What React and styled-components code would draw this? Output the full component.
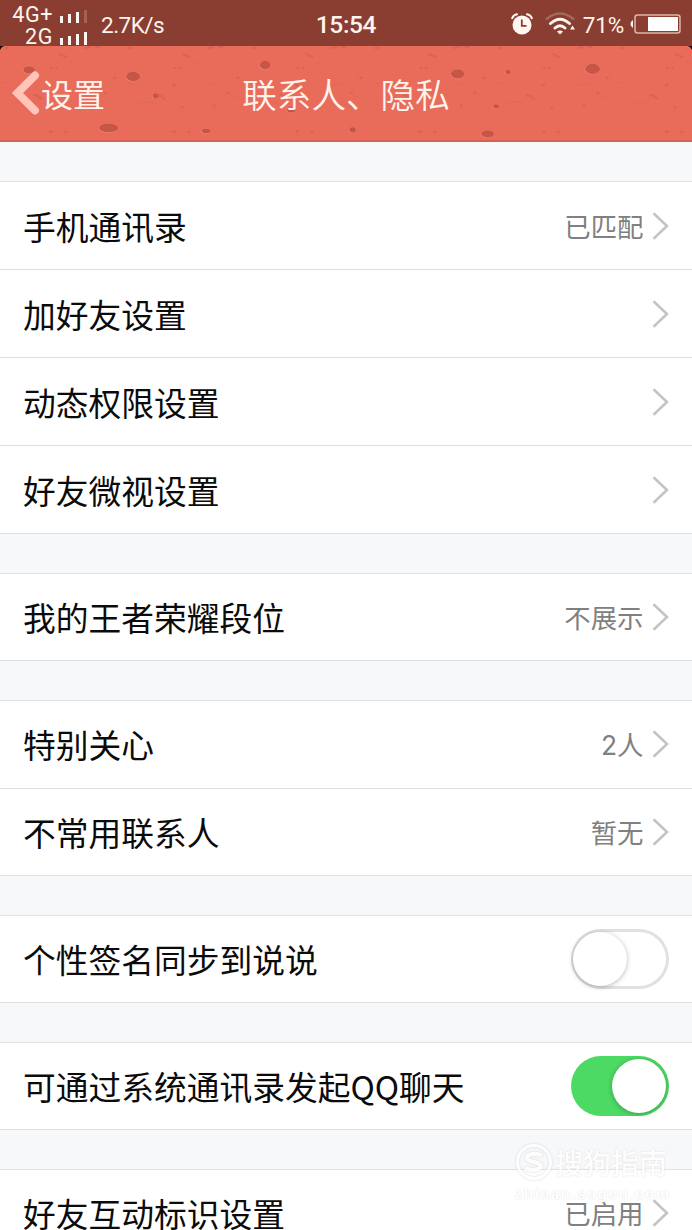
import React from "react";
import styled, { createGlobalStyle } from "styled-components";

const Global = createGlobalStyle`
  * { box-sizing: border-box; }
  html, body { margin: 0; padding: 0; }
  body { background: #f7f8fa; font-family: "Noto Sans CJK SC", sans-serif; overflow: hidden; }
`;

const Screen = styled.div`
  position: relative;
  width: 692px;
  height: 1230px;
  overflow: hidden;
  background: #f7f8fa;
  display: flex;
  flex-direction: column;
`;

const StatusBar = styled.div`
  flex: none;
  height: 46px;
  background: #8a3e31;
  color: #fff3ee;
  display: grid;
  grid-template-columns: 1fr auto 1fr;
  align-items: center;
  font-family: Roboto, sans-serif;
`;

const StatusLeft = styled.div`
  display: flex;
  align-items: center;
  height: 46px;
`;

const Carriers = styled.div`
  width: 87px;
  padding-top: 4px;
  display: flex;
  flex-direction: column;
`;

const Carrier = styled.div`
  display: flex;
  justify-content: flex-end;
  align-items: center;
  gap: 7px;
  height: 22px;
  font-size: 21.5px;
  letter-spacing: 0.6px;
  line-height: 22px;
`;

const Bars = styled.svg`
  display: block;
  margin-top: 1px;
`;

const Speed = styled.span`
  margin-left: 14px;
  font-size: 22.5px;
  line-height: 46px;
  letter-spacing: -0.5px;
  padding-top: 1px;
`;

const Clock = styled.span`
  font-size: 24.5px;
  font-weight: 500;
  letter-spacing: -0.35px;
  line-height: 46px;
  padding-top: 2px;
`;

const StatusRight = styled.div`
  display: flex;
  align-items: center;
  justify-content: flex-end;
  padding-right: 11px;
`;

const Percent = styled.span`
  font-size: 22.5px;
  line-height: 46px;
  letter-spacing: -0.2px;
  padding-top: 1px;
  margin: 0 6px 0 7px;
`;

const NavBar = styled.header`
  flex: none;
  position: relative;
  height: 96px;
  background: #e96b59;
  border-bottom: 2px solid #d46253;
  color: #fff3ed;
  display: grid;
  grid-template-columns: 1fr auto 1fr;
  align-items: center;
`;

const Texture = styled.svg`
  position: absolute;
  left: 0;
  top: 0;
`;

const Back = styled.div`
  position: relative;
  display: flex;
  align-items: center;
  padding-left: 11px;
  font-size: 32px;
  line-height: 94px;
  height: 94px;
`;

const Title = styled.h1`
  position: relative;
  margin: 0;
  font-size: 34.6px;
  font-weight: 350;
  line-height: 94px;
  height: 94px;
`;

const Groups = styled.main`
  display: flex;
  flex-direction: column;
  gap: 39px;
  padding-top: 39px;
`;

const Group = styled.section`
  background: #fff;
  border-top: 1px solid #e0e1e3;
  border-bottom: 1px solid #dddee0;
  display: flex;
  flex-direction: column;
  height: ${(p) => p.$height}px;
`;

const Row = styled.div`
  flex: 1;
  display: flex;
  align-items: center;
  padding: 0 23px;
  & + & { border-top: 1px solid #dedfe0; }
`;

const Label = styled.span`
  flex: 1;
  font-size: 32.75px;
  line-height: 48px;
  color: #0b0b0b;
  white-space: nowrap;
`;

const Value = styled.span`
  font-family: Inter, "Noto Sans CJK SC", sans-serif;
  font-size: 26.4px;
  line-height: 40px;
  color: #808080;
  padding-top: 2px;
  margin-right: 8.5px;
`;

const Switch = styled.span`
  width: 98px;
  height: 60px;
  border-radius: 30px;
  padding: ${(p) => (p.$on ? "3px" : "3px 2px")};
  display: flex;
  justify-content: ${(p) => (p.$on ? "flex-end" : "flex-start")};
  background: ${(p) => (p.$on ? "#4cd964" : "#fff")};
  box-shadow: ${(p) => (p.$on ? "none" : "inset 0 0 0 3px #e1e1e1")};
`;

const Knob = styled.span`
  width: 54px;
  height: 54px;
  border-radius: 50%;
  background: #fff;
  box-shadow: 0 1px 5px rgba(0, 0, 0, 0.28);
`;

const Watermark = styled.div`
  position: absolute;
  left: 515px;
  top: 1142px;
  width: 160px;
  color: #fff;
  opacity: 0.85;
  text-shadow: 0 0 2px #d4d4d4;
`;

const Brand = styled.div`
  display: flex;
  align-items: center;
  gap: 2px;
  font-size: 28px;
  font-weight: 500;
  line-height: 40px;
`;

const Mark = styled.svg`
  filter: drop-shadow(0 0 1px #cfcfcf);
`;

const Site = styled.div`
  font-family: "Liberation Sans", sans-serif;
  font-weight: 700;
  font-size: 15px;
  letter-spacing: 1.5px;
  line-height: 16px;
  margin-top: 4px;
  white-space: nowrap;
`;

const Signal = ({ dimLast }) => (
  <Bars width="27" height="14" fill="#fff6f1">
    <rect x="0" y="7" width="3" height="7" />
    <rect x="8" y="5" width="3" height="9" />
    <rect x="16" y="3" width="3" height="11" />
    <rect x="24" y="1" width="3" height="13" opacity={dimLast ? 0.2 : 1} />
  </Bars>
);

const Alarm = () => (
  <svg width="22" height="22" viewBox="0 0 22 22">
    <circle cx="11" cy="12" r="9.5" fill="#fff6f1" />
    <path d="M1.2 5.2Q2.5 2 6 1.3M20.8 5.2Q19.5 2 16 1.3" fill="none" stroke="#fff6f1" strokeWidth="2" strokeLinecap="round" />
    <path d="M10.8 6.5V12.8H15.5" fill="none" stroke="#8a3e31" strokeWidth="1.8" />
  </svg>
);

const WifiMark = styled.svg`
  margin-left: 12px;
`;

const Wifi = () => (
  <WifiMark width="31" height="24" viewBox="0 0 31 24" fill="none" strokeLinecap="round">
    <path d="M1.5 7Q15 -4 28.5 7" stroke="#fff" strokeOpacity=".22" strokeWidth="2.3" />
    <path d="M5.5 11.5Q15 3 24.5 11.5" stroke="#fff6f1" strokeWidth="3" />
    <path d="M10 16Q15 11.5 20 16" stroke="#fff6f1" strokeWidth="3" />
    <path d="M12 19.5Q15 17.5 18 19.5L15 22.5Z" fill="#fff6f1" />
    <path d="M25 17.5L27.5 13.5L30 17.5Z" fill="#fff6f1" />
  </WifiMark>
);

const Battery = () => (
  <svg width="51" height="20" viewBox="0 0 51 20">
    <path d="M3 6Q0.5 7.5 .5 10T3 14Z" fill="#fff6f1" />
    <rect x="5" y="1" width="45" height="18" rx="2.5" fill="none" stroke="#e0b5ab" strokeWidth="1.5" />
    <rect x="18" y="3" width="30" height="14" fill="#fff" />
  </svg>
);

const pits = [
  [29, 24, 5.5, 3.2], [133, 30.5, 6.8, 4.4], [155.5, 50, 3, 2.5], [108.5, 82, 9.5, 4],
  [206, 85, 4.5, 2], [265, 19, 5.2, 4], [457.5, 28, 6.5, 4.2], [352.5, 84, 3.2, 2.6],
  [291, 64, 4, 2.5], [592.5, 23, 7.3, 4.8], [508, 26, 2.5, 2], [496, 60.5, 3, 1.8], [487.5, 88, 6.2, 3.2],
];

const Sponge = () => (
  <Texture width="692" height="94">
    <defs>
      <pattern id="specks" width="123.2" height="94" patternUnits="userSpaceOnUse">
        <g fill="none" stroke="#b94f40" strokeLinecap="round" opacity=".5">
          <path d="M60 8l4 2 2 1M85 2l5-1M96 1h3M51 22h1M56 22.5l1.5-.5M34 49l4 1 3 3" strokeWidth="2" opacity=".6" />
          <path d="M6 2h2M50 85.5h1.5M65 86h1M50 39h1.5M59 61v.5M91 60l.5-1M105 47h.5M114 32h1" strokeWidth="2.4" opacity=".6" />
          <path d="M70 16l6 2M84 40q8-4 14 0M12 58q12-4 20 0M96 56l8 6M108 50l10 4M2 36l9 2" strokeWidth="1.3" opacity=".2" />
        </g>
      </pattern>
    </defs>
    <rect width="692" height="94" fill="url(#specks)" />
    {pits.map(([x, y, rx, ry]) => (
      <g key={`${x}-${y}`}>
        <ellipse cx={x - 0.6} cy={y + 0.6} rx={rx} ry={ry} fill="#f08575" />
        <ellipse cx={x} cy={y} rx={rx - 0.5} ry={ry - 0.4} fill="#c65748" stroke="#b94d3f" strokeWidth=".8" />
      </g>
    ))}
    <path d="M0 0H4Q1 1 0 4Z" fill="#160504" />
    <path d="M692 0H688Q691 1 692 4Z" fill="#160504" />
  </Texture>
);

const BackArrow = () => (
  <svg width="30" height="46" viewBox="0 0 30 46">
    <path d="M24 5.5L6.5 23L24 40.5" fill="none" stroke="#ffc5b9" strokeWidth="8" strokeLinecap="round" strokeLinejoin="miter" />
  </svg>
);

const Chevron = () => (
  <svg width="17" height="28" viewBox="0 0 17 28">
    <path d="M1.5 1.2L15 14L1.5 26.8" fill="none" stroke="#c4c4c6" strokeWidth="2.6" />
  </svg>
);

const groups = [
  { height: 353, rows: [["手机通讯录", "已匹配"], ["加好友设置"], ["动态权限设置"], ["好友微视设置"]] },
  { height: 88, rows: [["我的王者荣耀段位", "不展示"]] },
  { height: 176, rows: [["特别关心", "2人"], ["不常用联系人", "暂无"]] },
  { height: 88, rows: [["个性签名同步到说说", false]] },
  { height: 88, rows: [["可通过系统通讯录发起QQ聊天", true]] },
  { height: 88, rows: [["好友互动标识设置", "已启用"]] },
];

const SettingRow = ({ label, value }) => (
  <Row>
    <Label>{label}</Label>
    {typeof value === "boolean" ? (
      <Switch $on={value}><Knob /></Switch>
    ) : (
      <>
        {value && <Value>{value}</Value>}
        <Chevron />
      </>
    )}
  </Row>
);

export default function App() {
  return (
    <Screen>
      <Global />
      <StatusBar>
        <StatusLeft>
          <Carriers>
            <Carrier>4G+<Signal dimLast /></Carrier>
            <Carrier>2G<Signal /></Carrier>
          </Carriers>
          <Speed>2.7K/s</Speed>
        </StatusLeft>
        <Clock>15:54</Clock>
        <StatusRight>
          <Alarm />
          <Wifi />
          <Percent>71%</Percent>
          <Battery />
        </StatusRight>
      </StatusBar>
      <NavBar>
        <Sponge />
        <Back><BackArrow />设置</Back>
        <Title>联系人、隐私</Title>
      </NavBar>
      <Groups>
        {groups.map((g) => (
          <Group key={g.rows[0][0]} $height={g.height}>
            {g.rows.map(([label, value]) => (
              <SettingRow key={label} label={label} value={value} />
            ))}
          </Group>
        ))}
      </Groups>
      <Watermark>
        <Brand>
          <Mark width="38" height="38" viewBox="0 0 38 38" fill="none" stroke="#fff">
            <circle cx="19" cy="19" r="16.5" strokeWidth="3" />
            <path d="M27 12.5Q19 9 13 12.5Q10 17 19 19T25 25Q19 29 10 25" strokeWidth="4" />
          </Mark>
          搜狗指南
        </Brand>
        <Site>zhinan.sogou.com</Site>
      </Watermark>
    </Screen>
  );
}
